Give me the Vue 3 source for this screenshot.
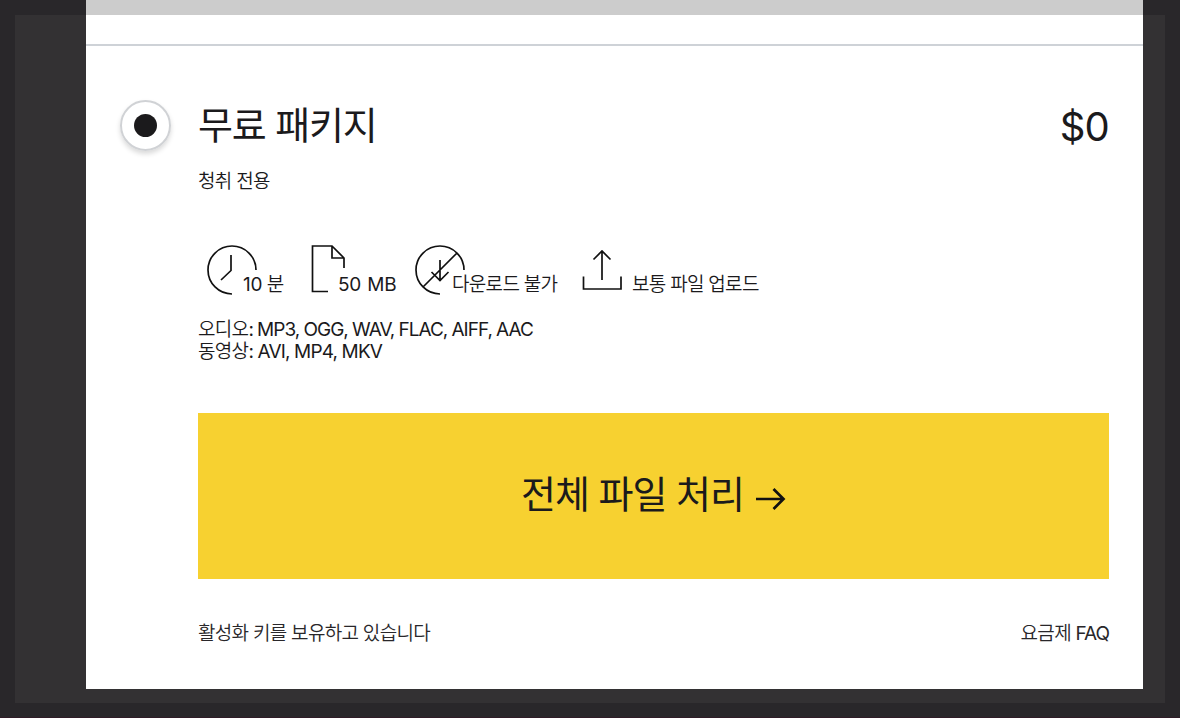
<script setup>
const formats = [
  { label: '오디오', list: 'MP3, OGG, WAV, FLAC, AIFF, AAC', cls: 'audio' },
  { label: '동영상', list: 'AVI, MP4, MKV', cls: 'video' },
]
</script>

<template>
  <div class="backdrop">
    <div class="frame">
      <main class="sheet">
        <div class="top-strip"></div>
        <section class="plan">
          <div class="radio"><span class="dot"></span></div>
          <div class="body">
            <header class="heading">
              <h2 class="title">무료 패키지</h2>
              <span class="price">$0</span>
            </header>
            <p class="subtitle">청취 전용</p>
            <ul class="features">
              <li class="time">
                <svg width="52" height="52" viewBox="0 0 52 52"><path d="M50 26A24 24 0 1 0 26 50M25 11V26.500L15 36" /></svg>
                <span><span class="lat">10</span> 분</span>
              </li>
              <li class="size">
                <svg width="36" height="52" viewBox="0 0 36 52"><path d="M18 47.500H2.500V2H22L34 14V24M22 2V14H34" /></svg>
                <span class="lat">50 MB</span>
              </li>
              <li class="download">
                <svg width="52" height="52" viewBox="0 0 52 52"><path d="M50 26A24 24 0 1 0 26 50M9.500 42.500L42.500 9.500M26 16V36.500M17.500 28L26 36.500L34.500 28" /></svg>
                <span>다운로드 불가</span>
              </li>
              <li class="upload">
                <svg width="42" height="52" viewBox="0 0 42 52"><path d="M1.500 32.500V45H39V32.500M20 36V7M11.500 15.500L20 7L28.500 15.500" /></svg>
                <span>보통 파일 업로드</span>
              </li>
            </ul>
            <div class="formats">
              <p v-for="f in formats" :key="f.label">{{ f.label }}<span class="lat" :class="f.cls">: {{ f.list }}</span></p>
            </div>
            <button class="cta">
              <span>전체 파일 처리</span>
              <svg width="32" height="26" viewBox="0 0 32 26"><path d="M2 13H29M19.500 3L29.500 13L19.500 23" /></svg>
            </button>
            <footer class="links">
              <a>활성화 키를 보유하고 있습니다</a>
              <a>요금제 <span class="lat faq">FAQ</span></a>
            </footer>
          </div>
        </section>
      </main>
    </div>
  </div>
</template>

<style>
body { background: #29272a; }
</style>

<style scoped>
* { box-sizing: border-box; margin: 0; padding: 0; }
.backdrop {
  width: 1180px;
  height: 718px;
  overflow: hidden;
  background: #29272a;
  border-bottom: 1px solid #301c27;
  padding: 15px 15px 14px;
  color: #1b1a1c;
  font-family: "Noto Sans CJK KR", sans-serif;
  font-weight: 350;
  font-size: 19px;
  line-height: 22px;
  letter-spacing: -0.68px;
  word-spacing: 1px;
}
.frame { display: flex; height: 688px; background: #333133; padding: 0 22px 0 71px; }
.sheet { width: 1057px; height: 689px; margin-top: -15px; background: #fff; }
.top-strip { height: 15px; background: #ccc; }
.plan {
  margin-top: 29px;
  border-top: 2px solid #ced2d7;
  padding: 54px 34px 0;
  display: flex;
}
.radio {
  width: 51px;
  height: 51px;
  border: 2px solid #d0d2d5;
  border-radius: 50%;
  display: grid;
  place-items: center;
  box-shadow: 0 3px 5px rgba(0, 0, 0, .15);
  margin-right: 27px;
  flex: none;
}
.dot { width: 23px; height: 23px; border-radius: 50%; background: #1b1a1c; }
.body { flex: 1; }
.heading { display: flex; justify-content: space-between; height: 51px; line-height: 51px; }
.title { font-size: 38px; font-weight: 400; line-height: 45px; letter-spacing: -1.1px; word-spacing: 2px; }
.price { font-family: Inter, sans-serif; font-weight: 380; font-size: 40px; line-height: 53px; letter-spacing: -0.8px; }
.subtitle { margin-top: 18px; }
.features { list-style: none; display: flex; margin-top: 53px; height: 52px; }
.features li { display: flex; white-space: nowrap; }
.features li > span { margin-top: 28px; }
svg { flex: none; fill: none; stroke: #111; stroke-width: 1.7; }
.lat { font-family: Inter, sans-serif; font-weight: 380; font-size: 19px; line-height: 0; letter-spacing: -1px; }
.audio { word-spacing: -0.2px; letter-spacing: -0.98px; }
.video { word-spacing: 0; letter-spacing: -0.85px; }
.time { margin-left: 8px; width: 104px; }
.time > span { margin-left: -15px; }
.time .lat { letter-spacing: -0.3px; }
.size { width: 104px; }
.features .size > span { margin-left: -8px; margin-top: 30px; line-height: 22px; letter-spacing: -0.2px; }
.download { width: 168px; }
.download > span { margin-left: -14px; }
.upload > span { margin-left: 8px; }
.formats { margin-top: 21px; height: 44px; }
.cta {
  margin-top: 52px;
  width: 911px;
  height: 166px;
  border: 0;
  background: #f7d130;
  display: flex;
  align-items: center;
  justify-content: center;
  color: #1b1a1c;
  font: 400 38px/50px "Noto Sans CJK KR", sans-serif;
  letter-spacing: -1px;
  word-spacing: 2px;
}
.cta span { padding-bottom: 8px; }
.cta svg { margin: 5px 0 0 10px; stroke-width: 2.7; }
.links { margin-top: 42px; display: flex; justify-content: space-between; color: #29272a; }
</style>
